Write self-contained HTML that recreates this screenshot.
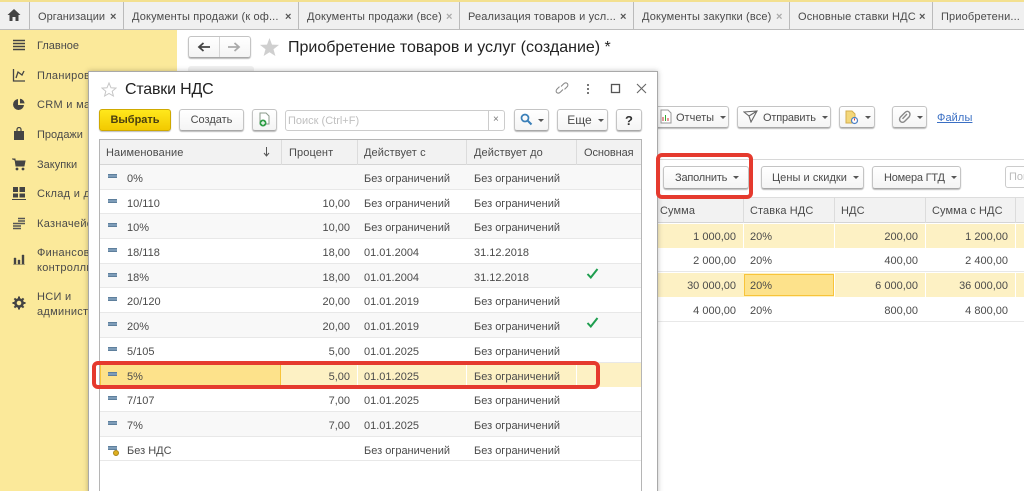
<!DOCTYPE html>
<html><head><meta charset="utf-8"><style>
html,body{margin:0;padding:0;width:1024px;height:491px;overflow:hidden;background:#fff}
body{position:relative;font-family:"Liberation Sans",sans-serif;font-size:11px;color:#4b4b4b;filter:blur(.3px)}
.a,.t,.b,.r,svg{position:absolute}
.t{white-space:nowrap;line-height:14px}
.tr{text-align:right}
.b{box-sizing:border-box;border:1px solid #c4c4c4;border-bottom:1px solid #a8a8a8;border-radius:3px;background:linear-gradient(#fff,#f4f4f4);box-shadow:0 1px 1px #bbb;line-height:22px;text-align:center;white-space:nowrap}
.dd:after{content:"";display:inline-block;border:3px solid transparent;border-top:3px solid #555;border-bottom:0;margin-left:6px;vertical-align:2px}
.r{left:100px;width:541px;border-bottom:1px solid #e8e8e8;box-sizing:border-box}
.g{background:#f8f8f8}
.r .t{top:50%;margin-top:-5px}
.c1{left:27px}.c2{left:180px;width:70px;text-align:right}.c3{left:264px}.c4{left:374px}
.m{position:absolute;left:8px;top:50%;margin-top:-3px;width:9px;height:4px;background:#7d9cb8;border-top:1px solid #5e7f9c;border-bottom:1px solid #5e7f9c;box-sizing:border-box}
.sep{position:absolute;width:1px;background:#dcdcdc}
.red{position:absolute;box-sizing:border-box;border:3px solid #e53a2e;border-radius:6px}
.y{background:#fdf1c4}
.nav{color:#4a4a4a}
</style></head><body>
<div class="a" style="left:0;top:0;width:1024px;height:2px;background:#f3e08f"></div>
<div class="a" style="left:0;top:2px;width:1024px;height:27px;background:#f0f0f0;border-bottom:1px solid #bdbdbd;box-sizing:content-box"></div>
<svg style="left:6px;top:8px" width="16" height="14" viewBox="0 0 16 14"><path d="M8 1 1.5 7H3.5V13H6.5V9H9.5V13H12.5V7H14.5Z" fill="#444"/></svg>
<div class="sep" style="left:29px;top:2px;height:27px;background:#bbb"></div>
<div class="sep" style="left:123px;top:2px;height:27px;background:#bbb"></div>
<div class="sep" style="left:298px;top:2px;height:27px;background:#bbb"></div>
<div class="sep" style="left:459px;top:2px;height:27px;background:#bbb"></div>
<div class="sep" style="left:633px;top:2px;height:27px;background:#bbb"></div>
<div class="sep" style="left:789px;top:2px;height:27px;background:#bbb"></div>
<div class="sep" style="left:932px;top:2px;height:27px;background:#bbb"></div>
<div class="t" style="left:38px;top:10px;letter-spacing:.05px">Организации</div><div class="t" style="left:110px;top:10px;font-weight:bold;color:#555">×</div>
<div class="t" style="left:132px;top:10px;letter-spacing:.15px">Документы продажи (к оф...</div><div class="t" style="left:285px;top:10px;font-weight:bold;color:#555">×</div>
<div class="t" style="left:307px;top:10px;letter-spacing:.15px">Документы продажи (все)</div><div class="t" style="left:446px;top:10px;color:#aaa;font-weight:bold">×</div>
<div class="t" style="left:468px;top:10px;letter-spacing:.15px">Реализация товаров и усл...</div><div class="t" style="left:620px;top:10px;font-weight:bold;color:#555">×</div>
<div class="t" style="left:642px;top:10px;letter-spacing:.15px">Документы закупки (все)</div><div class="t" style="left:776px;top:10px;color:#aaa;font-weight:bold">×</div>
<div class="t" style="left:798px;top:10px;letter-spacing:.15px">Основные ставки НДС</div><div class="t" style="left:919px;top:10px;font-weight:bold;color:#555">×</div>
<div class="t" style="left:941px;top:10px;letter-spacing:.15px">Приобретени...</div>

<!-- sidebar -->
<div class="a" style="left:0;top:30px;width:177px;height:461px;background:#fbe99a"></div>
<svg style="left:12px;top:39px" width="14" height="12"><path d="M1 1.5H13M1 4.5H13M1 7.5H13M1 10.5H13" stroke="#444" stroke-width="1.4"/></svg>
<svg style="left:12px;top:68px" width="14" height="14"><path d="M1.5 1V13H13M4 10 6 4 10 7 12 3" stroke="#444" fill="none" stroke-width="1.3"/></svg>
<svg style="left:12px;top:98px" width="14" height="13"><path d="M6 1A5.5 5.5 0 1 0 12 7H6Z" fill="#444"/><path d="M8 0.8A5 5 0 0 1 12.6 5.4H8Z" fill="#444"/></svg>
<svg style="left:13px;top:127px" width="12" height="14"><path d="M1 4H11V13H1Z" fill="#444"/><path d="M4 5V2.5A2 2 0 0 1 8 2.5V5" stroke="#444" fill="none" stroke-width="1.2"/></svg>
<svg style="left:12px;top:158px" width="14" height="13"><path d="M0 1H3L4 8H12L13 3H3.5" fill="#444" stroke="#444"/><circle cx="5" cy="11" r="1.4" fill="#444"/><circle cx="11" cy="11" r="1.4" fill="#444"/></svg>
<svg style="left:12px;top:187px" width="14" height="13"><path d="M1 0H6V5H1ZM7.5 0H13V5H7.5ZM1 6.5H6V10.5H1ZM7.5 6.5H13V10.5H7.5ZM0 12H14V13H0Z" fill="#444"/></svg>
<svg style="left:12px;top:217px" width="14" height="13"><path d="M6 1.5H13M6 4H13M6 6.5H13M1 6.5H6M1 9H9M1 11.5H9" stroke="#555" stroke-width="1.6"/></svg>
<svg style="left:13px;top:254px" width="12" height="11"><path d="M1 4H3V10H1ZM5 6H7V10H5ZM9 1H11V10H9ZM0 10.5H12" fill="#444" stroke="#444" stroke-width=".4"/></svg>
<svg style="left:12px;top:296px" width="14" height="14" viewBox="0 0 14 14"><circle cx="7" cy="7" r="3.6" fill="none" stroke="#444" stroke-width="2.6"/><path d="M7 .5V3M7 11V13.5M.5 7H3M11 7H13.5M2.4 2.4 4 4M10 10 11.6 11.6M2.4 11.6 4 10M10 4 11.6 2.4" stroke="#444" stroke-width="2"/></svg>
<div class="t nav" style="left:37px;top:39px">Главное</div>
<div class="t nav" style="left:37px;top:69px;letter-spacing:.3px">Планирование</div>
<div class="t nav" style="left:37px;top:98px;letter-spacing:.3px">CRM и маркетинг</div>
<div class="t nav" style="left:37px;top:128px">Продажи</div>
<div class="t nav" style="left:37px;top:158px">Закупки</div>
<div class="t nav" style="left:37px;top:187px;letter-spacing:.3px">Склад и доставка</div>
<div class="t nav" style="left:37px;top:217px;letter-spacing:.3px">Казначейство</div>
<div class="t nav" style="left:37px;top:246px;letter-spacing:.3px">Финансовый</div>
<div class="t nav" style="left:37px;top:261px;letter-spacing:.3px">контроллинг</div>
<div class="t nav" style="left:37px;top:290px;letter-spacing:.3px">НСИ и</div>
<div class="t nav" style="left:37px;top:305px;letter-spacing:.3px">администрирование</div>

<!-- main form -->
<div class="b" style="left:188px;top:36px;width:63px;height:22px"></div>
<div class="sep" style="left:219px;top:37px;height:20px;background:#d5d5d5"></div>
<svg style="left:197px;top:42px" width="14" height="10"><path d="M13 5H3M6.5 1 2 5 6.5 9" stroke="#444" fill="none" stroke-width="1.8"/></svg>
<svg style="left:227px;top:42px" width="14" height="10"><path d="M1 5H11M7.5 1 12 5 7.5 9" stroke="#aaa" fill="none" stroke-width="1.8"/></svg>
<svg style="left:259px;top:37px" width="21" height="20" viewBox="0 0 21 20"><path d="M10.5 1 13 7.6 20 7.9 14.5 12.3 16.400 19 10.500 15.200 4.600 19 6.500 12.300 1 7.900 8 7.600Z" fill="#cfcfcf"/></svg>
<div class="t" style="left:288px;top:39px;font-size:16px;line-height:18px;color:#222">Приобретение товаров и услуг (создание) *</div>
<div class="a" style="left:188px;top:66px;width:66px;height:6px;background:#f0f0f0;border-radius:3px 3px 0 0"></div>

<div class="b" style="left:640px;top:106px;width:89px;height:22px;text-align:left;padding-left:35px"><span class="dd">Отчеты</span></div>
<svg style="left:658px;top:109px" width="14" height="15"><path d="M3 1H10L13 4V14H3Z" fill="#fff" stroke="#999"/><path d="M5 12V8M7.500 12V6M10 12V9" stroke="#c33"/><path d="M7.500 12V6" stroke="#3a3"/></svg>
<div class="b" style="left:737px;top:106px;width:94px;height:22px;text-align:left;padding-left:25px"><span class="dd" style="letter-spacing:-.2px">Отправить</span></div>
<svg style="left:743px;top:110px" width="15" height="13"><path d="M1 2 14 1 8 12 6 6ZM6 6 14 1" fill="none" stroke="#666" stroke-width="1.100"/></svg>
<div class="b" style="left:839px;top:106px;width:36px;height:22px"></div>
<svg style="left:845px;top:110px" width="14" height="15"><path d="M1 1H7L10 4V13H1Z" fill="#f3d77a" stroke="#d4ae4d"/><circle cx="9.500" cy="10.500" r="3" fill="#fff" stroke="#4a7fc4" stroke-width="1.200"/><path d="M9.500 8.500V10.500" stroke="#d33"/></svg>
<div class="a" style="left:865px;top:116px;border:3px solid transparent;border-top:3px solid #555;border-bottom:0"></div>
<div class="b" style="left:892px;top:106px;width:35px;height:22px"></div>
<svg style="left:898px;top:110px" width="14" height="14"><path d="M11 2C9.500.8 8 1.500 7 2.500L2.500 7C1 8.500 1.500 10.500 2.500 11.500 3.500 12.500 5.300 12.700 6.500 11.500L11 7C12 5.800 12.500 3.500 11 2ZM9 4 4.500 8.800" fill="none" stroke="#888" stroke-width="1.400"/></svg>
<div class="a" style="left:917px;top:116px;border:3px solid transparent;border-top:3px solid #555;border-bottom:0"></div>
<div class="t" style="left:937px;top:111px;color:#3a6fc4;text-decoration:underline;letter-spacing:.1px">Файлы</div>

<div class="a" style="left:658px;top:159px;width:366px;height:1px;background:#d8d8d8"></div>
<div class="b" style="left:663px;top:166px;width:86px;height:23px;line-height:23px;text-align:left;padding-left:11px"><span class="dd" style="letter-spacing:-.2px">Заполнить</span></div>
<div class="b" style="left:761px;top:166px;width:103px;height:23px;line-height:23px;text-align:left;padding-left:10px"><span class="dd" style="letter-spacing:.05px">Цены и скидки</span></div>
<div class="b" style="left:872px;top:166px;width:89px;height:23px;line-height:23px;text-align:left;padding-left:11px"><span class="dd" style="letter-spacing:-.2px">Номера ГТД</span></div>
<div class="a" style="left:1005px;top:166px;width:25px;height:22px;border:1px solid #ccc;border-radius:3px;box-sizing:border-box;line-height:21px;color:#bbb;padding-left:3px;overflow:hidden">Поиск</div>

<!-- doc table -->
<div class="a" style="left:658px;top:197px;width:366px;height:26px;background:#f2f2f2;border-top:1px solid #ddd;border-bottom:1px solid #d5d5d5;box-sizing:border-box"></div>
<div class="a y" style="left:658px;top:224px;width:366px;height:24px"></div>
<div class="a" style="left:658px;top:248px;width:366px;height:24px;border-bottom:1px solid #e8e8e8;box-sizing:border-box"></div>
<div class="a y" style="left:658px;top:273px;width:366px;height:24px"></div>
<div class="a" style="left:658px;top:297px;width:366px;height:25px;border-bottom:1px solid #e8e8e8;box-sizing:border-box"></div>
<div class="sep" style="left:743px;top:197px;height:26px"></div><div class="sep" style="left:834px;top:197px;height:26px"></div><div class="sep" style="left:925px;top:197px;height:26px"></div><div class="sep" style="left:1015px;top:197px;height:26px"></div>
<div class="sep" style="left:743px;top:224px;height:24px;background:#fff"></div><div class="sep" style="left:834px;top:224px;height:24px;background:#fff"></div><div class="sep" style="left:925px;top:224px;height:24px;background:#fff"></div><div class="sep" style="left:1015px;top:224px;height:24px;background:#fff"></div>
<div class="sep" style="left:834px;top:273px;height:24px;background:#fff"></div><div class="sep" style="left:925px;top:273px;height:24px;background:#fff"></div><div class="sep" style="left:1015px;top:273px;height:24px;background:#fff"></div>
<div class="a" style="left:744px;top:274px;width:90px;height:22px;background:#fde28b;border:1px solid #f8c43a;box-sizing:border-box"></div>
<div class="t" style="left:660px;top:204px;letter-spacing:.1px">Сумма</div><div class="t" style="left:750px;top:204px;letter-spacing:.1px">Ставка НДС</div><div class="t" style="left:841px;top:204px;letter-spacing:.1px">НДС</div><div class="t" style="left:932px;top:204px;letter-spacing:.1px">Сумма с НДС</div>
<div class="t tr" style="left:656px;width:80px;top:230px">1 000,00</div><div class="t" style="left:750px;top:230px">20%</div><div class="t tr" style="left:838px;width:80px;top:230px">200,00</div><div class="t tr" style="left:928px;width:80px;top:230px">1 200,00</div>
<div class="t tr" style="left:656px;width:80px;top:254px">2 000,00</div><div class="t" style="left:750px;top:254px">20%</div><div class="t tr" style="left:838px;width:80px;top:254px">400,00</div><div class="t tr" style="left:928px;width:80px;top:254px">2 400,00</div>
<div class="t tr" style="left:656px;width:80px;top:279px">30 000,00</div><div class="t" style="left:750px;top:279px">20%</div><div class="t tr" style="left:838px;width:80px;top:279px">6 000,00</div><div class="t tr" style="left:928px;width:80px;top:279px">36 000,00</div>
<div class="t tr" style="left:656px;width:80px;top:304px">4 000,00</div><div class="t" style="left:750px;top:304px">20%</div><div class="t tr" style="left:838px;width:80px;top:304px">800,00</div><div class="t tr" style="left:928px;width:80px;top:304px">4 800,00</div>

<!-- dialog -->
<div class="a" style="left:88px;top:71px;width:570px;height:430px;background:#fff;border:1px solid #a9a9a9;box-sizing:border-box;box-shadow:0 0 5px rgba(0,0,0,.25)"></div>
<svg style="left:101px;top:82px" width="16" height="15" viewBox="0 0 16 15"><path d="M8 1 10 5.800 15 6.100 11.200 9.300 12.400 14 8 11.500 3.600 14 4.800 9.300 1 6.100 6 5.800Z" fill="none" stroke="#c6c6c6"/></svg>
<div class="t" style="left:125px;top:81px;font-size:16px;line-height:18px;color:#222;letter-spacing:-.2px">Ставки НДС</div>
<svg style="left:554px;top:80px" width="16" height="16"><path d="M7 6.500 9.500 4C11 2.500 12.500 2.800 13.300 3.500 14 4.300 14.200 5.800 12.900 7L10.500 9.400M9 9.500 6.500 12C5 13.500 3.500 13.200 2.700 12.500 2 11.700 1.800 10.200 3.100 9L5.500 6.600" fill="none" stroke="#8a8a8a" stroke-width="1.100"/></svg>
<svg style="left:586px;top:83px" width="4" height="12"><path d="M2 1V3M2 5V7M2 9V11" stroke="#777" stroke-width="2"/></svg>
<svg style="left:610px;top:83px" width="11" height="11"><rect x="1.500" y="1.500" width="8" height="8" fill="none" stroke="#555" stroke-width="1.300"/></svg>
<svg style="left:636px;top:83px" width="11" height="11"><path d="M1 1 10 10M10 1 1 10" stroke="#666" stroke-width="1.100"/></svg>

<div class="b" style="left:99px;top:109px;width:72px;height:22px;background:linear-gradient(#ffe81c,#f2c900);border-color:#cfa900;color:#4a3f10;font-weight:bold;line-height:21px">Выбрать</div>
<div class="b" style="left:179px;top:109px;width:65px;height:22px;line-height:21px">Создать</div>
<div class="b" style="left:252px;top:109px;width:25px;height:22px"></div>
<svg style="left:257px;top:112px" width="15" height="16"><path d="M3 1H9L12 4V12H3Z" fill="#fff" stroke="#8a9a8a"/><circle cx="6" cy="11" r="3.500" fill="#2f9e46"/><path d="M6 9V13M4 11H8" stroke="#fff" stroke-width="1.200"/></svg>
<div class="a" style="left:285px;top:110px;width:220px;height:21px;border:1px solid #ccc;border-radius:3px;box-sizing:border-box;line-height:20px;padding-left:2px;color:#c0c0c0">Поиск (Ctrl+F)</div>
<div class="sep" style="left:488px;top:110px;height:21px;background:#ccc"></div>
<div class="t" style="left:493px;top:113px;color:#777;font-size:10px">×</div>
<div class="b" style="left:514px;top:109px;width:35px;height:22px"></div>
<svg style="left:520px;top:113px" width="13" height="13"><circle cx="5" cy="5" r="3.500" fill="none" stroke="#3a7fb8" stroke-width="1.700"/><path d="M7.500 7.500 11.500 11.500" stroke="#3a7fb8" stroke-width="2"/></svg>
<div class="a" style="left:538px;top:119px;border:3px solid transparent;border-top:3px solid #555;border-bottom:0"></div>
<div class="b" style="left:557px;top:109px;width:51px;height:22px;line-height:21px;padding-left:6px"><span class="dd" style="font-size:12px">Еще</span></div>
<div class="b" style="left:616px;top:109px;width:26px;height:22px;line-height:21px;font-weight:bold;font-size:13px;color:#333">?</div>

<!-- rates table -->
<div class="a" style="left:99px;top:139px;width:543px;height:360px;border:1px solid #b5b5b5;box-sizing:border-box"></div>
<div class="a" style="left:100px;top:140px;width:541px;height:25px;background:#f2f2f2;border-bottom:1px solid #d5d5d5;box-sizing:border-box"></div>
<div class="sep" style="left:281px;top:140px;height:25px"></div><div class="sep" style="left:357px;top:140px;height:25px"></div><div class="sep" style="left:466px;top:140px;height:25px"></div><div class="sep" style="left:576px;top:140px;height:25px"></div>
<div class="t" style="left:106px;top:146px;letter-spacing:.1px">Наименование</div>
<svg style="left:263px;top:147px" width="7" height="10"><path d="M3.500 0V8M1 6 3.500 9 6 6" fill="none" stroke="#555"/></svg>
<div class="t" style="left:289px;top:146px;letter-spacing:.1px">Процент</div><div class="t" style="left:364px;top:146px;letter-spacing:.1px">Действует с</div><div class="t" style="left:474px;top:146px;letter-spacing:.1px">Действует до</div><div class="t" style="left:584px;top:146px;letter-spacing:-.1px">Основная</div>

<div class="r g" style="top:165px;height:25px"><i class="m"></i><div class="t c1">0%</div><div class="t c3">Без ограничений</div><div class="t c4">Без ограничений</div></div>
<div class="r" style="top:190px;height:24px"><i class="m"></i><div class="t c1">10/110</div><div class="t c2">10,00</div><div class="t c3">Без ограничений</div><div class="t c4">Без ограничений</div></div>
<div class="r g" style="top:214px;height:25px"><i class="m"></i><div class="t c1">10%</div><div class="t c2">10,00</div><div class="t c3">Без ограничений</div><div class="t c4">Без ограничений</div></div>
<div class="r" style="top:239px;height:25px"><i class="m"></i><div class="t c1">18/118</div><div class="t c2">18,00</div><div class="t c3">01.01.2004</div><div class="t c4">31.12.2018</div></div>
<div class="r g" style="top:264px;height:24px"><i class="m"></i><div class="t c1">18%</div><div class="t c2">18,00</div><div class="t c3">01.01.2004</div><div class="t c4">31.12.2018</div></div>
<div class="r" style="top:288px;height:25px"><i class="m"></i><div class="t c1">20/120</div><div class="t c2">20,00</div><div class="t c3">01.01.2019</div><div class="t c4">Без ограничений</div></div>
<div class="r g" style="top:313px;height:25px"><i class="m"></i><div class="t c1">20%</div><div class="t c2">20,00</div><div class="t c3">01.01.2019</div><div class="t c4">Без ограничений</div></div>
<div class="r" style="top:338px;height:25px"><i class="m"></i><div class="t c1">5/105</div><div class="t c2">5,00</div><div class="t c3">01.01.2025</div><div class="t c4">Без ограничений</div></div>
<div class="r y" style="top:363px;height:24px;border:0"><div class="a" style="left:0;top:1px;width:181px;height:22px;background:#fde28b;border:1px solid #f8c43a;box-sizing:border-box"></div><div class="sep" style="left:257px;top:0;height:24px;background:#fff"></div><div class="sep" style="left:366px;top:0;height:24px;background:#fff"></div><div class="sep" style="left:476px;top:0;height:24px;background:#fff"></div><i class="m"></i><div class="t c1">5%</div><div class="t c2">5,00</div><div class="t c3">01.01.2025</div><div class="t c4">Без ограничений</div></div>
<div class="r" style="top:387px;height:25px"><i class="m"></i><div class="t c1">7/107</div><div class="t c2">7,00</div><div class="t c3">01.01.2025</div><div class="t c4">Без ограничений</div></div>
<div class="r g" style="top:412px;height:25px"><i class="m"></i><div class="t c1">7%</div><div class="t c2">7,00</div><div class="t c3">01.01.2025</div><div class="t c4">Без ограничений</div></div>
<div class="r" style="top:437px;height:24px"><i class="m"></i><div class="a" style="left:13px;top:13px;width:6px;height:6px;border-radius:50%;background:#e0b020;border:1px solid #a8861a;box-sizing:border-box"></div><div class="t c1">Без НДС</div><div class="t c3">Без ограничений</div><div class="t c4">Без ограничений</div></div>

<svg style="left:586px;top:268px" width="13" height="11"><path d="M1.500 6 4.800 9.500 11.500 1" fill="none" stroke="#1f9e4f" stroke-width="2"/></svg>
<svg style="left:586px;top:317px" width="13" height="11"><path d="M1.500 6 4.800 9.500 11.500 1" fill="none" stroke="#1f9e4f" stroke-width="2"/></svg>

<div class="red" style="left:656px;top:153px;width:97px;height:46px;border-width:4px"></div>
<div class="red" style="left:92px;top:361px;width:508px;height:28px;border-width:4px"></div>
</body></html>
